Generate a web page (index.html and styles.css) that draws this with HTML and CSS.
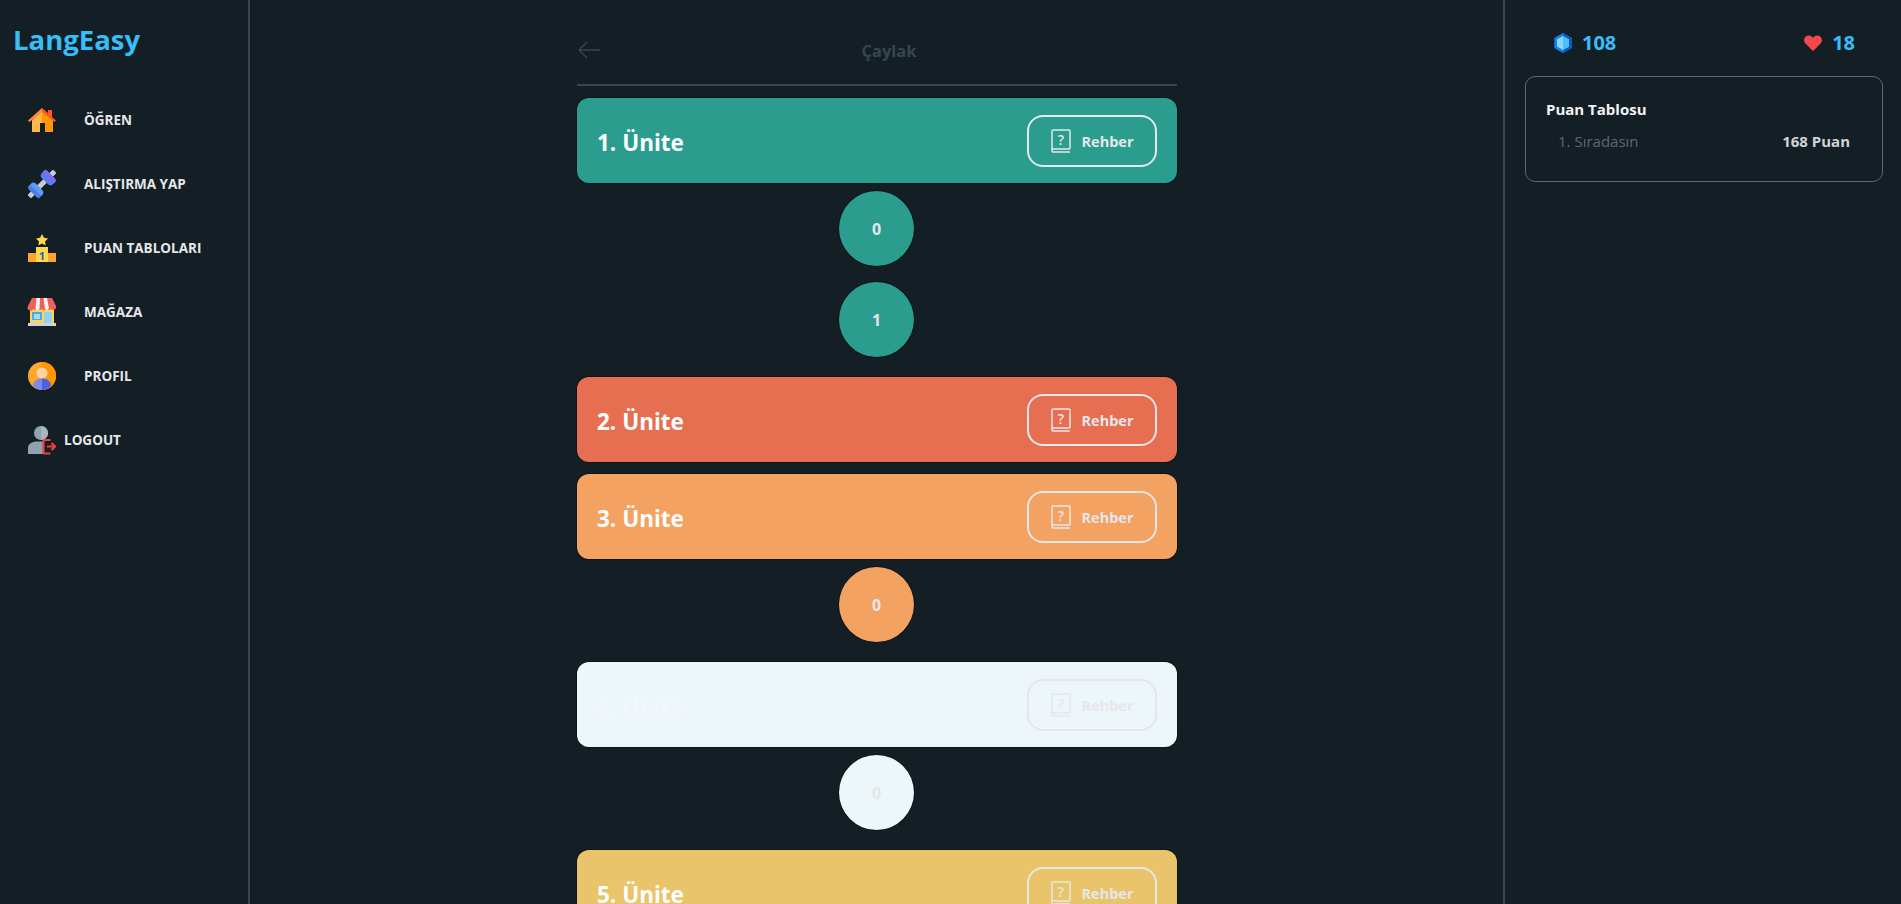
FILE: index.html
```html
<!DOCTYPE html>
<html lang="tr">
<head>
<meta charset="utf-8">
<title>LangEasy</title>
<link rel="stylesheet" href="styles.css">
</head>
<body>
<div class="app">
  <aside class="nav">
    <h1 class="logo">LangEasy</h1>
    <ul class="menu">
      <li class="menu-item">
        <svg class="menu-icon" viewBox="0 0 28 28"><path d="M4 14 14 5v21H4z" fill="#ffb74d"/><path d="M25 14 14 5v21h11z" fill="#ff9800"/><path d="M14 2 0 14.500l1.500 1.500L14 6z" fill="#ff8a3d"/><path d="M14 2l6 5V4h4v7l4 3.500-1.500 1.500L14 6z" fill="#ff5722"/><path d="M12 17h5v9h-5z" fill="#141f25"/></svg>
        <span class="menu-label">ÖĞREN</span>
      </li>
      <li class="menu-item">
        <svg class="menu-icon" viewBox="0 0 28 28"><g transform="rotate(-45 14 14)"><rect x="-4" y="11.500" width="36" height="5" rx="1" fill="#c8ccd0"/><rect x="1" y="6" width="9" height="16" rx="4" fill="#5b9cf5"/><rect x="1" y="6" width="4" height="16" rx="2" fill="#4f7be8"/><rect x="18" y="6" width="9" height="16" rx="4" fill="#5b7cf0"/><rect x="23" y="6" width="4" height="16" rx="2" fill="#7c6cf0"/></g></svg>
        <span class="menu-label">ALIŞTIRMA YAP</span>
      </li>
      <li class="menu-item">
        <svg class="menu-icon" viewBox="0 0 28 28"><path d="M0 19h28v9H0z" fill="#ffa52e"/><path d="M8 13h12v15H8z" fill="#ffd84d"/><path d="m14 0 1.900 3.800 4.100.600-3 3 .700 4.200L14 9.600l-3.700 2 .700-4.200-3-3 4.100-.600z" fill="#ffd84d"/><text x="14" y="26" text-anchor="middle" class="podium-num">1</text></svg>
        <span class="menu-label">PUAN TABLOLARI</span>
      </li>
      <li class="menu-item">
        <svg class="menu-icon" viewBox="0 0 28 28"><path d="M2 10h24v15H2z" fill="#ffd45c"/><path d="M4 14h10v8H4z" fill="#4fa8e0"/><path d="M6 16h6v5H6z" fill="#a5dcf5"/><path d="M16 14h8v11h-8z" fill="#8fd3f0"/><path d="M0 25h28v3H0z" fill="#cfd4d8"/><path d="M4 0h20l4 8a3 3 0 0 1-5 3 3 3 0 0 1-4.500 0 3 3 0 0 1-4.500 0 3 3 0 0 1-4 0 3 3 0 0 1-4.500 0A3 3 0 0 1 0 8z" fill="#f0605a"/><path d="M8.500 0h3.500l-.500 11a3 3 0 0 1-4 0zM15.500 0H19l2 10.500a3 3 0 0 1-4 .500z" fill="#f4f4f4"/></svg>
        <span class="menu-label">MAĞAZA</span>
      </li>
      <li class="menu-item">
        <svg class="menu-icon" viewBox="0 0 28 28"><circle cx="14" cy="14" r="14" fill="#ffa726"/><path d="M14 0a14 14 0 0 1 0 28z" fill="#ff9800"/><circle cx="14" cy="11" r="5.500" fill="#ffd3a3"/><path d="M5 24c0-5 4-7.500 9-7.500V28a14 14 0 0 1-9-4z" fill="#7b8cf0"/><path d="M23 24c0-5-4-7.500-9-7.500V28a14 14 0 0 0 9-4z" fill="#4a62e8"/></svg>
        <span class="menu-label">PROFIL</span>
      </li>
      <li class="menu-item menu-item-tight">
        <svg class="menu-icon" viewBox="0 0 28 28"><circle cx="13" cy="7" r="7" fill="#8fa3ae"/><path d="M13 0a7 7 0 0 1 0 14z" fill="#a6b7c0"/><path d="M0 28v-6c0-4 4-6.500 9-6.500h6V28z" fill="#8fa3ae"/><path d="M22.500 14H17a1.500 1.500 0 0 0-1.500 1.500v10.500a1.500 1.500 0 0 0 1.500 1.500h5.500" fill="#141f25" stroke="#f0403a" stroke-width="2.200"/><path d="M19 20.500h8M23.500 17l3.500 3.500-3.500 3.500" fill="none" stroke="#f0403a" stroke-width="2.200"/></svg>
        <span class="menu-label">LOGOUT</span>
      </li>
    </ul>
  </aside>

  <main class="main">
    <div class="course">
      <header class="course-head">
        <svg class="back" viewBox="0 0 24 20"><path d="M23 10H2M10 2l-8 8 8 8" fill="none" stroke="currentColor" stroke-width="1.300"/></svg>
        <span class="course-title">Çaylak</span>
      </header>

      <section class="unit unit-teal">
        <div class="unit-card">
          <h2 class="unit-name">1. Ünite</h2>
          <a class="guide"><svg class="guide-icon" viewBox="0 0 20 24"><path d="M2 1h16a1 1 0 0 1 1 1v17a1 1 0 0 1-1 1H2a1 1 0 0 1-1-1V2a1 1 0 0 1 1-1zM1 19v3a1 1 0 0 0 1 1h17" fill="none" stroke="currentColor" stroke-width="1.500"/><text x="10" y="15.500" text-anchor="middle" class="book-q">?</text></svg><span class="guide-text">Rehber</span></a>
        </div>
        <div class="path"><div class="lesson">0</div><div class="lesson">1</div></div>
      </section>

      <section class="unit unit-red">
        <div class="unit-card">
          <h2 class="unit-name">2. Ünite</h2>
          <a class="guide"><svg class="guide-icon" viewBox="0 0 20 24"><path d="M2 1h16a1 1 0 0 1 1 1v17a1 1 0 0 1-1 1H2a1 1 0 0 1-1-1V2a1 1 0 0 1 1-1zM1 19v3a1 1 0 0 0 1 1h17" fill="none" stroke="currentColor" stroke-width="1.500"/><text x="10" y="15.500" text-anchor="middle" class="book-q">?</text></svg><span class="guide-text">Rehber</span></a>
        </div>
      </section>

      <section class="unit unit-orange">
        <div class="unit-card">
          <h2 class="unit-name">3. Ünite</h2>
          <a class="guide"><svg class="guide-icon" viewBox="0 0 20 24"><path d="M2 1h16a1 1 0 0 1 1 1v17a1 1 0 0 1-1 1H2a1 1 0 0 1-1-1V2a1 1 0 0 1 1-1zM1 19v3a1 1 0 0 0 1 1h17" fill="none" stroke="currentColor" stroke-width="1.500"/><text x="10" y="15.500" text-anchor="middle" class="book-q">?</text></svg><span class="guide-text">Rehber</span></a>
        </div>
        <div class="path"><div class="lesson">0</div></div>
      </section>

      <section class="unit unit-white">
        <div class="unit-card">
          <h2 class="unit-name">4. Ünite</h2>
          <a class="guide"><svg class="guide-icon" viewBox="0 0 20 24"><path d="M2 1h16a1 1 0 0 1 1 1v17a1 1 0 0 1-1 1H2a1 1 0 0 1-1-1V2a1 1 0 0 1 1-1zM1 19v3a1 1 0 0 0 1 1h17" fill="none" stroke="currentColor" stroke-width="1.500"/><text x="10" y="15.500" text-anchor="middle" class="book-q">?</text></svg><span class="guide-text">Rehber</span></a>
        </div>
        <div class="path"><div class="lesson">0</div></div>
      </section>

      <section class="unit unit-yellow">
        <div class="unit-card">
          <h2 class="unit-name">5. Ünite</h2>
          <a class="guide"><svg class="guide-icon" viewBox="0 0 20 24"><path d="M2 1h16a1 1 0 0 1 1 1v17a1 1 0 0 1-1 1H2a1 1 0 0 1-1-1V2a1 1 0 0 1 1-1zM1 19v3a1 1 0 0 0 1 1h17" fill="none" stroke="currentColor" stroke-width="1.500"/><text x="10" y="15.500" text-anchor="middle" class="book-q">?</text></svg><span class="guide-text">Rehber</span></a>
        </div>
      </section>
    </div>
  </main>

  <aside class="side">
    <div class="stats">
      <div class="stat">
        <svg class="gem" viewBox="0 0 20 20"><path d="M10 0l8.700 5v10L10 20l-8.700-5V5z" fill="#1283ee"/><path d="M10 0l8.700 5v10L10 20z" fill="#0a5cc4"/><path d="M10 3l6 3.500v7L10 17l-6-3.500v-7z" fill="#8ad8fb"/><path d="M10 3l6 3.500v7L10 17z" fill="#4cc0f8"/></svg>
        <span class="stat-value">108</span>
      </div>
      <div class="stat">
        <svg class="heart" viewBox="0 0 18 16"><path d="M9 16 1.500 8.500A4.600 4.600 0 0 1 1.500 1.800a4.600 4.600 0 0 1 6.500 0L9 2.800l1-1a4.600 4.600 0 0 1 6.500 0 4.600 4.600 0 0 1 0 6.700z" fill="#f4484d"/></svg>
        <span class="stat-value">18</span>
      </div>
    </div>
    <div class="board">
      <h3 class="board-title">Puan Tablosu</h3>
      <div class="board-row">
        <span class="board-rank">1. Sıradasın</span>
        <span class="board-score">168 Puan</span>
      </div>
    </div>
  </aside>
</div>
</body>
</html>
```
FILE: styles.css
```css
* { box-sizing: border-box; }
html, body { height: 100%; }
body {
  margin: 0;
  background: #141f25;
  color: #e5e7eb;
  font-family: "Open Sans", "Noto Sans", sans-serif;
  overflow: hidden;
}
.app {
  display: grid;
  grid-template-columns: 250px 1254px 397px;
  height: 904px;
}
.nav { border-right: 2px solid #37464f; padding: 21px 0 0 13px; }
.logo {
  margin: 0 0 47px;
  font-size: 27.5px;
  line-height: 38px;
  font-weight: 700;
  color: #38bdf8;
}
.menu { list-style: none; margin: 0; padding: 0 0 0 15px; display: flex; flex-direction: column; gap: 36px; }
.menu-item { display: flex; align-items: center; gap: 28px; height: 28px; }
.menu-item-tight { gap: 8px; }
.menu-icon { width: 28px; height: 28px; flex: none; overflow: visible; }
.menu-label { font-size: 13.5px; font-weight: 700; color: #e5e7eb; }
.podium-num { font: 700 11px "Open Sans", sans-serif; fill: #1565c0; }

.main { overflow: hidden; display: flex; justify-content: center; }
.course { width: 600px; flex: none; }
.course-head {
  position: relative;
  height: 86px;
  border-bottom: 2px solid #37464f;
  display: flex;
  align-items: center;
  justify-content: center;
  padding: 16px 0 0;
  margin-bottom: 12px;
  color: #37464f;
}
.back { position: absolute; left: 0; top: 40px; width: 24px; height: 20px; }
.course-title { font-size: 16.5px; font-weight: 700; margin-left: 24px; }
.unit { margin-bottom: 12px; }
.unit-card {
  height: 85px;
  border-radius: 12px;
  display: flex;
  align-items: center;
  justify-content: space-between;
  padding: 0 20px;
  color: #fff;
  box-shadow: 0 0 0 1px #0d1519;
}
.unit-name { margin: 4px 0 0; font-size: 22.5px; font-weight: 700; line-height: 32px; }
.guide {
  width: 130px;
  height: 52px;
  border: 2px solid #e5e7eb;
  border-radius: 16px;
  display: flex;
  align-items: center;
  justify-content: center;
  gap: 11px;
  font-size: 14.5px;
  font-weight: 700;
  color: #e5e7eb;
}
.guide-text { margin-top: 1px; }
.guide-icon { width: 20px; height: 24px; flex: none; color: #e5e7eb; }
.book-q { font: 600 14px "Open Sans", sans-serif; fill: currentColor; }
.path { display: flex; flex-direction: column; align-items: center; gap: 16px; padding: 8px 1px 8px 0; }
.lesson {
  width: 75px;
  height: 75px;
  border-radius: 50%;
  display: flex;
  align-items: center;
  justify-content: center;
  font-size: 16px;
  font-weight: 700;
  color: #e5e7eb;
  box-shadow: 0 0 0 1px #0d1519;
}
.unit-teal .unit-card, .unit-teal .lesson { background: #2a9d8f; }
.unit-red .unit-card { background: #e76f51; }
.unit-orange .unit-card, .unit-orange .lesson { background: #f4a261; }
.unit-white .unit-card, .unit-white .lesson { background: #edf6f9; }
.unit-white .unit-card { color: #f1f8fb; }
.unit-yellow .unit-card { background: #e9c46a; }

.side { border-left: 2px solid #37464f; padding: 0 18px 0 20px; margin-left: -1px; }
.stats { display: flex; justify-content: space-between; padding: 32px 28px 0; height: 76px; }
.stat { display: flex; align-items: center; gap: 9px; height: 22px; }
.gem { width: 20px; height: 20px; }
.heart { width: 18px; height: 16px; margin-right: 1px; }
.stat-value { font-size: 20px; font-weight: 700; color: #38bdf8; margin-top: -2px; }
.board {
  height: 106px;
  border: 1px solid #5b6b75;
  border-radius: 10px;
  padding: 22px 32px 0 20px;
}
.board-title { margin: 0 0 11px; font-size: 15px; line-height: 20px; font-weight: 700; color: #f3f4f6; }
.board-row { display: flex; justify-content: space-between; padding-left: 12px; font-size: 15px; line-height: 22px; }
.board-rank { color: #5d6870; }
.board-score { font-weight: 700; color: #d1d5db; }
```
